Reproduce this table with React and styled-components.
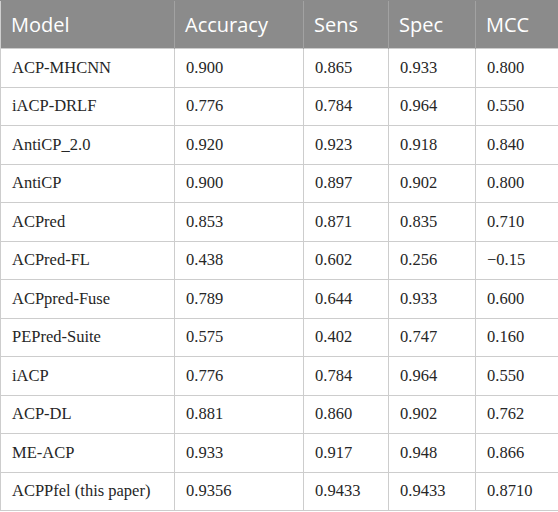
import styled, { createGlobalStyle } from "styled-components";

const rows = [
    ["ACP-MHCNN", "0.900", "0.865", "0.933", "0.800"],
    ["iACP-DRLF", "0.776", "0.784", "0.964", "0.550"],
    ["AntiCP_2.0", "0.920", "0.923", "0.918", "0.840"],
    ["AntiCP", "0.900", "0.897", "0.902", "0.800"],
    ["ACPred", "0.853", "0.871", "0.835", "0.710"],
    ["ACPred-FL", "0.438", "0.602", "0.256", "\u22120.15"],
    ["ACPpred-Fuse", "0.789", "0.644", "0.933", "0.600"],
    ["PEPred-Suite", "0.575", "0.402", "0.747", "0.160"],
    ["iACP", "0.776", "0.784", "0.964", "0.550"],
    ["ACP-DL", "0.881", "0.860", "0.902", "0.762"],
    ["ME-ACP", "0.933", "0.917", "0.948", "0.866"],
    ["ACPPfel (this paper)", "0.9356", "0.9433", "0.9433", "0.8710"],
];

const columns = [
    { label: "Model", width: 174 },
    { label: "Accuracy", width: 129 },
    { label: "Sens", width: 85 },
    { label: "Spec", width: 87 },
    { label: "MCC", width: 83 },
];

const GlobalStyle = createGlobalStyle`
    body {
        margin: 0;
        background: #fff;
    }
`;

const Table = styled.table`
    width: 558px;
    height: 511px;
    border-collapse: collapse;
    table-layout: fixed;
`;

const HeadCell = styled.th`
    height: 47px;
    padding: 0 10px 0 10px;
    background: #8b8b8b;
    color: #fff;
    font-family: "Open Sans", sans-serif;
    font-size: 20px;
    font-weight: 400;
    text-align: left;
    border-left: 1px solid #a2a2a2;
    border-top: 1px solid #8b8b8b;

    &:first-child {
        border-left: 1px solid #cfcfcf;
    }
`;

const Cell = styled.td`
    padding: 0 10px 0 11px;
    font-family: "Liberation Serif", serif;
    font-size: 16.5px;
    color: #262626;
    border: 1px solid #cdcdcd;
    white-space: nowrap;
`;

export default function App() {
    return (
        <>
            <GlobalStyle />
            <Table>
                <colgroup>
                    {columns.map((c) => (
                        <col key={c.label} style={{ width: c.width }} />
                    ))}
                </colgroup>
                <thead>
                    <tr>
                        {columns.map((c) => (
                            <HeadCell key={c.label}>{c.label}</HeadCell>
                        ))}
                    </tr>
                </thead>
                <tbody>
                    {rows.map((r) => (
                        <tr key={r[0]}>
                            {r.map((v, i) => (
                                <Cell key={i}>{v}</Cell>
                            ))}
                        </tr>
                    ))}
                </tbody>
            </Table>
        </>
    );
}
